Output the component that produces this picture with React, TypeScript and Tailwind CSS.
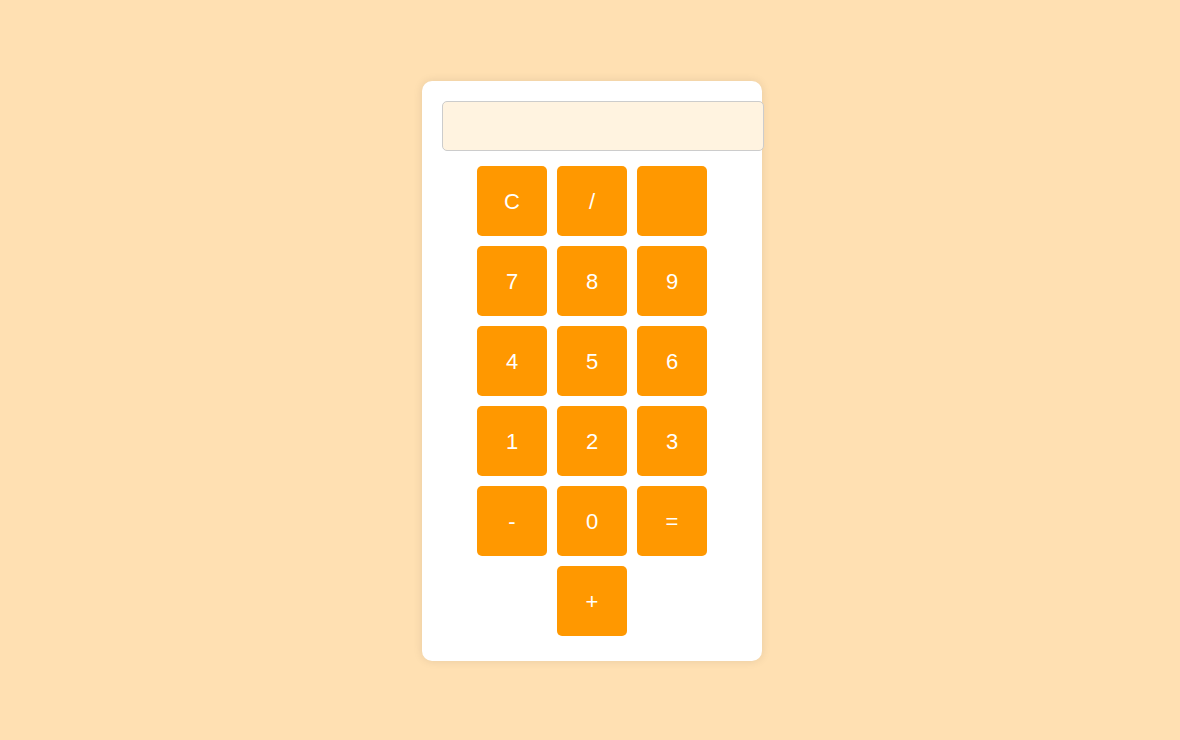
const keys = ["C", "/", "", "7", "8", "9", "4", "5", "6", "1", "2", "3", "-", "0", "=", "+"];

export default function App() {
  return (
    <div className="min-h-screen bg-[#ffe0b2] flex items-center justify-center pl-1 pt-[2px] font-['Liberation_Sans',Arial,sans-serif]">
      <div className="w-[340px] bg-white rounded-[10px] p-5 shadow-[0_0_10px_rgba(0,0,0,0.1)]">
        <input
          type="text"
          readOnly
          className="block w-[322px] h-[50px] mb-[10px] px-[10px] bg-[#fff3e0] border border-[#ccc] rounded-[5px] text-2xl text-right outline-none"
        />
        <div className="flex flex-wrap justify-center w-[240px] mx-auto">
          {keys.map((k, i) => (
            <button
              key={i}
              className="w-[70px] h-[70px] m-[5px] bg-[#ff9800] text-white text-[22px] rounded-[5px] flex items-center justify-center"
            >
              {k}
            </button>
          ))}
        </div>
      </div>
    </div>
  );
}
